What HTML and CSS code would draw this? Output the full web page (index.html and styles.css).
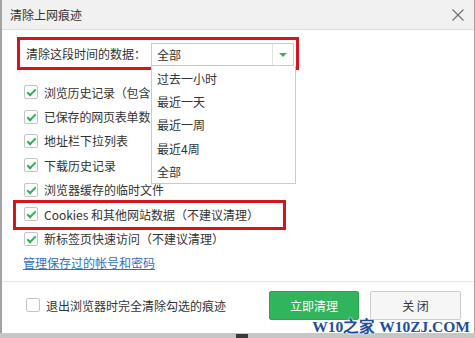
FILE: index.html
```html
<!DOCTYPE html>
<html lang="zh-CN">
<head>
    <meta charset="UTF-8">
    <title>清除上网痕迹</title>
    <link rel="stylesheet" href="styles.css">
</head>
<body>
    <div class="dialog">
        <div class="titlebar">
            <span class="title">清除上网痕迹</span>
            <svg class="close-x" width="12" height="12" viewBox="0 0 12 12">
                <path d="M0.5 0.5 L11.5 11.5 M11.5 0.5 L0.5 11.5" stroke="#6e6e6e" stroke-width="1.1" fill="none"/>
            </svg>
        </div>

        <!-- 时间范围 -->
        <div class="time-row">
            <span class="time-label">清除这段时间的数据：</span>
            <div class="select">
                <span class="select-text">全部</span>
                <span class="select-btn"><i class="arrow"></i></span>
                <ul class="options">
                    <li>过去一小时</li>
                    <li>最近一天</li>
                    <li>最近一周</li>
                    <li>最近4周</li>
                    <li>全部</li>
                </ul>
            </div>
        </div>

        <!-- 清理项目 -->
        <ul class="checks">
            <li><span class="box on"></span><span class="tight">浏览历史记录（包含</span></li>
            <li><span class="box on"></span><span class="tight">已保存的网页表单数</span></li>
            <li><span class="box on"></span>地址栏下拉列表</li>
            <li><span class="box on"></span>下载历史记录</li>
            <li><span class="box on"></span>浏览器缓存的临时文件</li>
            <li class="marked"><span class="box on"></span>Cookies 和其他网站数据（不建议清理）</li>
            <li><span class="box on"></span>新标签页快速访问（不建议清理）</li>
        </ul>

        <a class="manage-link" href="#">管理保存过的帐号和密码</a>

        <div class="footer">
            <span class="box"></span>
            <span class="exit-text">退出浏览器时完全清除勾选的痕迹</span>
            <div class="buttons">
                <button class="btn btn-green">立即清理</button>
                <button class="btn btn-gray">关 闭</button>
            </div>
        </div>
    </div>

    <div class="taskbar-mark"></div>
    <div class="watermark">W10之家 W10ZJ.COM</div>
</body>
</html>
```

FILE: styles.css
```css
body {
    margin: 0;
    width: 475px;
    height: 338px;
    overflow: hidden;
    position: relative;
    background-color: #c6c6c6;
    font-family: "Noto Sans CJK SC", "Microsoft YaHei", sans-serif;
    font-size: 12px;
    color: #333;
}
ul {
    list-style: none;
    margin: 0;
    padding: 0;
}
.dialog {
    width: 472px;
    height: 333px;
    background-color: #fff;
    border-left: 2px solid #a3a3a3;
    border-right: 1px solid #a3a3a3;
    display: flex;
    flex-direction: column;
}
.titlebar {
    height: 29px;
    background-color: #f1f1f1;
    border-bottom: 1px solid #dcdcdc;
    display: flex;
    align-items: center;
    justify-content: space-between;
    padding: 0 10px 0 8px;
}
.close-x {
    margin-top: 1px;
}

/* 时间选择行 */
.time-row {
    box-sizing: border-box;
    width: 282px;
    height: 33px;
    margin: 7px 0 0 15px;
    border: 3px solid #d2161c;
    display: flex;
    align-items: center;
    position: relative;
    z-index: 2;
}
.time-label {
    box-sizing: border-box;
    width: 131px;
    padding-left: 6px;
    flex: none;
}
.select {
    box-sizing: border-box;
    width: 143px;
    height: 23px;
    margin-top: 2px;
    border: 1px solid #cbcbcb;
    display: flex;
    align-items: center;
    position: relative;
    background: #fff;
}
.select-text {
    flex: 1;
    padding-left: 5px;
}
.select-btn {
    width: 20px;
    height: 100%;
    border-left: 1px solid #e2e2e2;
    display: flex;
    align-items: center;
    justify-content: center;
}
.arrow {
    width: 0;
    height: 0;
    border-top: 4px solid #3dab6b;
    border-left: 4px solid transparent;
    border-right: 4px solid transparent;
}
.options {
    position: absolute;
    top: 22px;
    left: -1px;
    box-sizing: border-box;
    width: 145px;
    height: 118px;
    padding-top: 1px;
    background: #fff;
    border: 1px solid #cbcbcb;
    border-top: none;
}
.options li {
    height: 23.2px;
    line-height: 23px;
    padding-left: 5px;
}

/* 勾选列表 */
.checks {
    margin-top: 10px;
    padding-left: 22px;
}
.checks li {
    height: 24.4px;
    display: flex;
    align-items: center;
    gap: 6px;
    position: relative;
    white-space: nowrap;
}
.checks li .tight {
    letter-spacing: -0.2px;
}
.checks li.marked::before {
    content: "";
    position: absolute;
    left: -11px;
    top: -2px;
    width: 273px;
    height: 30px;
    box-sizing: border-box;
    border: 3px solid #d2161c;
}
.box {
    box-sizing: border-box;
    width: 14px;
    height: 14px;
    flex: none;
    border: 1px solid #c4c4c4;
    border-radius: 2px;
    background: #fff;
    position: relative;
}
.box.on::after {
    content: "";
    position: absolute;
    left: 4px;
    top: 1px;
    width: 3px;
    height: 7px;
    border-right: 2px solid #2fae5c;
    border-bottom: 2px solid #2fae5c;
    transform: rotate(45deg);
}
.manage-link {
    display: block;
    align-self: flex-start;
    margin: 3px 0 0 21px;
    line-height: 18px;
    color: #2f6fc2;
    text-decoration: underline;
}

/* 底部 */
.footer {
    margin-top: 9px;
    border-top: 1px solid #e6e6e6;
    padding: 9px 13px 0 24px;
    display: flex;
    align-items: center;
}
.exit-text {
    margin-left: 6px;
}
.buttons {
    margin-left: auto;
    display: flex;
    gap: 11px;
}
.btn {
    box-sizing: border-box;
    width: 90px;
    height: 29px;
    border-radius: 2px;
    font-family: inherit;
    font-size: 12px;
    padding: 0;
}
.btn-green {
    background-color: #31b55c;
    border: 1px solid #2ba452;
    color: #fff;
}
.btn-gray {
    width: 91px;
    background-color: #f6f6f6;
    border: 1px solid #cdcdcd;
    color: #333;
}
.taskbar-mark {
    position: absolute;
    left: 236px;
    top: 334px;
    width: 12px;
    height: 4px;
    background: #3a3a3a;
}
.watermark {
    position: absolute;
    right: 5px;
    top: 318px;
    font-family: "Liberation Serif", serif;
    font-weight: bold;
    font-size: 15.5px;
    line-height: 18px;
    color: #1d4f9c;
    text-shadow: 0 0 2px #fff, 0 0 2px #fff;
}
```
